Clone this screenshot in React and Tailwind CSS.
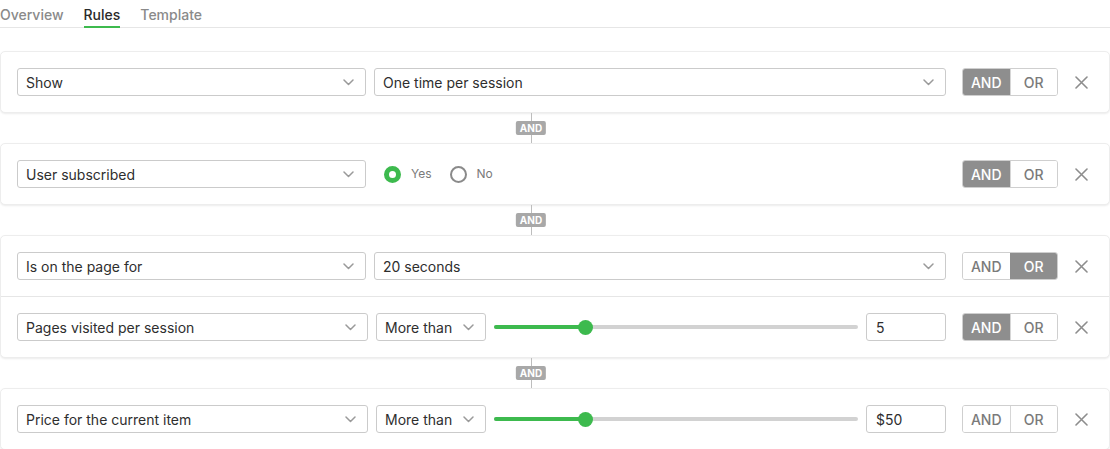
import React from "react";

const font = { fontFamily: "Inter, 'Noto Sans', Arial, sans-serif" };

function Chevron() {
  return (
    <svg width="11" height="7" viewBox="0 0 11 7" fill="none" className="shrink-0">
      <polyline points="1,1 5.5,5.5 10,1" stroke="#9a9a9a" strokeWidth="1.5" strokeLinecap="round" strokeLinejoin="round" />
    </svg>
  );
}

function Select({ label, className = "" }) {
  return (
    <div className={`h-[28px] border border-[#cbcbcb] rounded-[3px] bg-white flex items-center justify-between pl-[8px] pr-[11px] pt-px text-[14px] text-[#2e2e2e] ${className}`}>
      <span>{label}</span>
      <Chevron />
    </div>
  );
}

function AndOr({ active }) {
  return (
    <div className="flex h-[28px] w-[96px] shrink-0 rounded-[3px] overflow-hidden border border-[#cfcfcf] text-[14px] font-medium">
      <div className={`flex-1 flex items-center justify-center pt-px ${active === "and" ? "bg-[#8e8e8e] text-white" : "bg-white text-[#7a7a7a]"}`}>AND</div>
      <div className={`flex-1 flex items-center justify-center pt-px border-l ${active === "or" ? "bg-[#8e8e8e] text-white border-[#8e8e8e]" : "bg-white text-[#7a7a7a] border-[#d6d6d6]"}`}>OR</div>
    </div>
  );
}

function Close() {
  return (
    <div className="w-[24px] h-[28px] flex items-center justify-center shrink-0 ml-[11px]">
      <svg width="13" height="13" viewBox="0 0 13 13">
        <path d="M1 1 L12 12 M12 1 L1 12" stroke="#8d8d8d" strokeWidth="1.6" strokeLinecap="round" />
      </svg>
    </div>
  );
}

function Slider() {
  return (
    <div className="flex-1 relative h-[28px] flex items-center">
      <div className="w-full h-[4px] rounded-full bg-[#d2d2d2] flex">
        <div className="w-[91px] h-full rounded-full bg-[#3dba4e]" />
      </div>
      <div className="absolute left-[84px] top-[7px] w-[15px] h-[15px] rounded-full bg-[#3dba4e]" />
    </div>
  );
}

function NumInput({ value }) {
  return (
    <div className="w-[80px] h-[28px] shrink-0 border border-[#cbcbcb] rounded-[3px] flex items-center pl-[9px] pt-px text-[14px] text-[#2e2e2e]">
      {value}
    </div>
  );
}

function Row({ children, active }) {
  return (
    <div className="flex items-center px-[16px] py-[16px]">
      <div className="flex-1 flex items-center gap-[8px] mr-[16px]">{children}</div>
      <AndOr active={active} />
      <Close />
    </div>
  );
}

function Card({ children }) {
  return (
    <div className="border border-[#ededed] rounded-[5px] bg-white shadow-[0_1px_2px_rgba(0,0,0,0.08)]">
      {children}
    </div>
  );
}

function Connector() {
  return (
    <div className="w-[1062px] h-[30px] flex justify-center relative">
      <div className="w-px h-full bg-[#bdbdbd]" />
      <div className="absolute top-[8px] left-1/2 -translate-x-1/2 h-[14px] px-[4px] rounded-[2px] bg-[#a8a8a8] text-white text-[10px] font-bold flex items-center leading-none">
        AND
      </div>
    </div>
  );
}

function Radio({ checked, label }) {
  return (
    <div className="flex items-center gap-[10px] text-[12px] text-[#7a7a7a]">
      {checked ? (
        <div className="w-[17px] h-[17px] rounded-full border-[5px] border-[#3dba4e] bg-white" />
      ) : (
        <div className="w-[17px] h-[17px] rounded-full border-2 border-[#8a8a8a] bg-white" />
      )}
      <span>{label}</span>
    </div>
  );
}

export default function App() {
  return (
    <div className="w-[1110px] h-[449px] bg-white overflow-hidden" style={font}>
      <div className="h-[28px] border-b border-[#e6e6e6] flex items-stretch gap-[20px] text-[14px] font-medium">
        <div className="flex items-center text-[#8a8a8a] pt-[2px]">Overview</div>
        <div className="flex items-center text-[#2a2a2a] border-b-2 border-[#3dba4e] pt-[3px] -mb-px">Rules</div>
        <div className="flex items-center text-[#8a8a8a] pt-[2px]">Template</div>
      </div>
      <div className="pt-[23px]">
        <Card>
          <Row active="and">
            <Select label="Show" className="w-[349px] shrink-0" />
            <Select label="One time per session" className="flex-1" />
          </Row>
        </Card>
        <Connector />
        <Card>
          <Row active="and">
            <Select label="User subscribed" className="w-[349px] shrink-0" />
            <div className="flex items-center gap-[18px] ml-[10px]">
              <Radio checked label="Yes" />
              <Radio label="No" />
            </div>
          </Row>
        </Card>
        <Connector />
        <Card>
          <Row active="or">
            <Select label="Is on the page for" className="w-[349px] shrink-0" />
            <Select label="20 seconds" className="flex-1" />
          </Row>
          <div className="h-px bg-[#e6e6e6]" />
          <Row active="and">
            <Select label="Pages visited per session" className="w-[351px] shrink-0" />
            <Select label="More than" className="w-[110px] shrink-0" />
            <Slider />
            <NumInput value="5" />
          </Row>
        </Card>
        <Connector />
        <Card>
          <Row active="">
            <Select label="Price for the current item" className="w-[351px] shrink-0" />
            <Select label="More than" className="w-[110px] shrink-0" />
            <Slider />
            <NumInput value="$50" />
          </Row>
        </Card>
      </div>
    </div>
  );
}
